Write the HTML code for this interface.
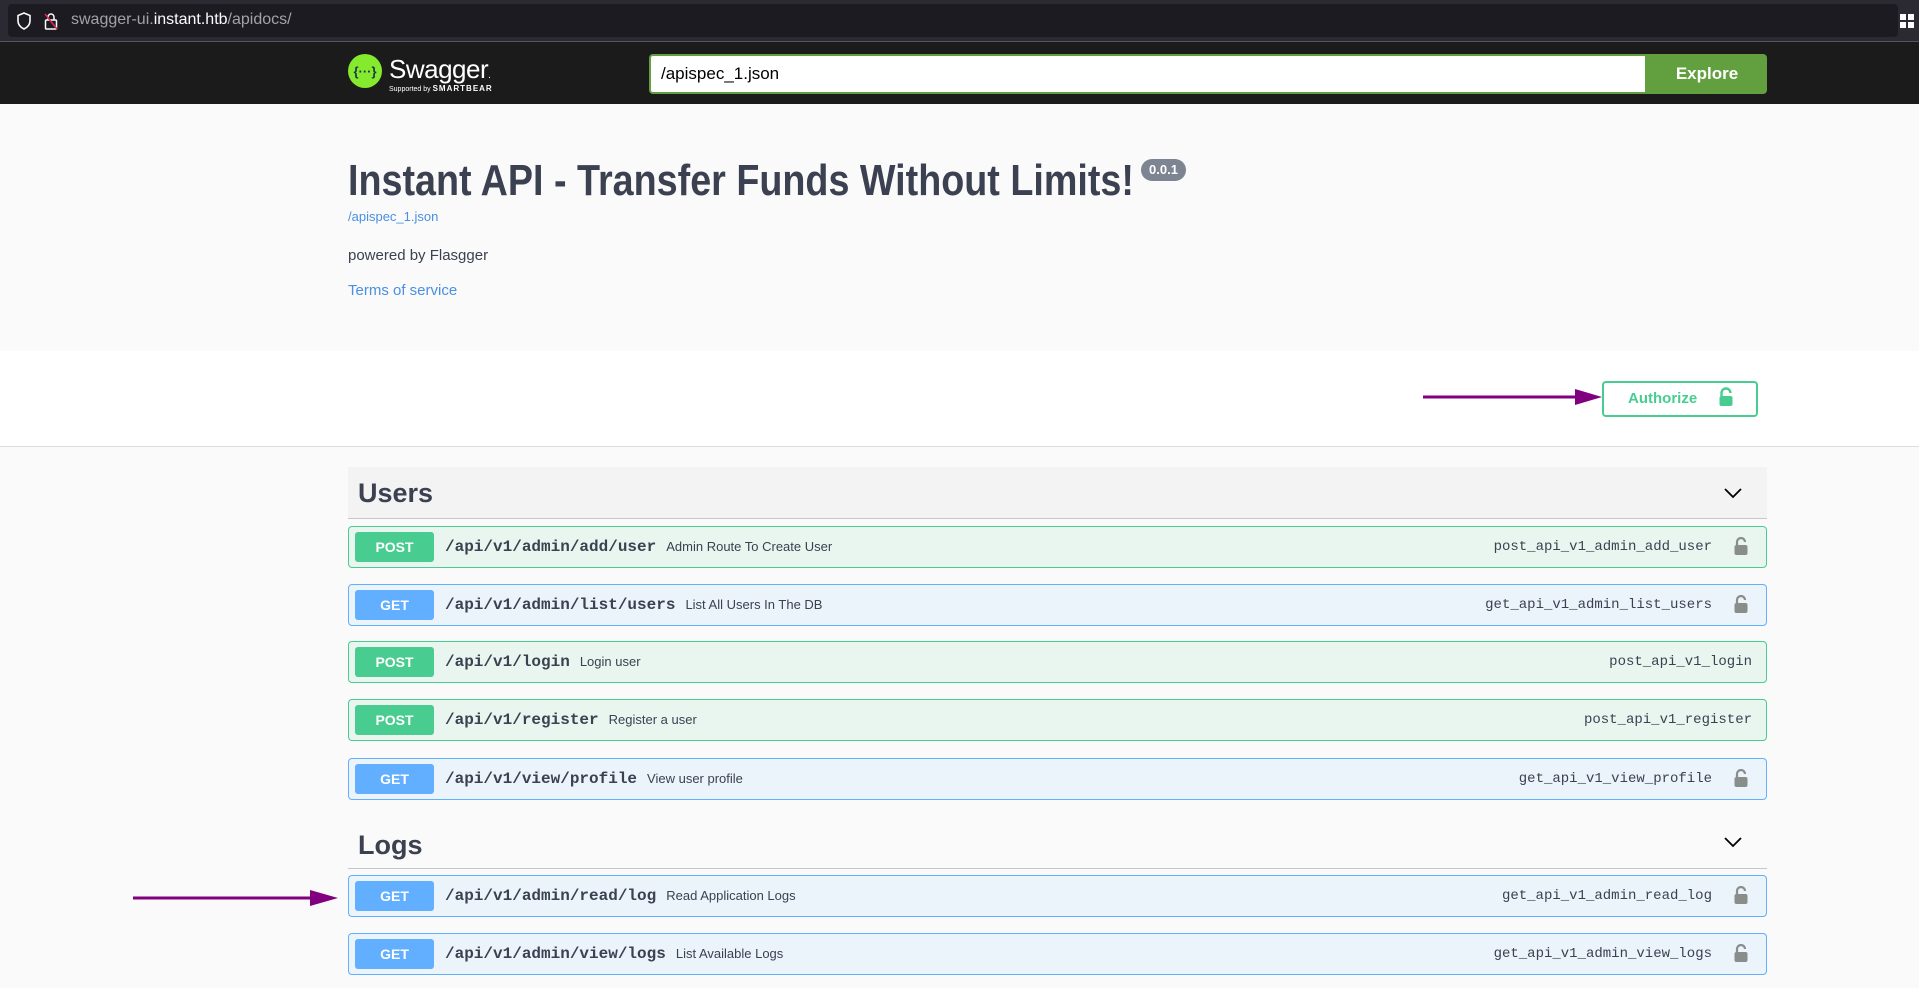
<!DOCTYPE html>
<html><head><meta charset="utf-8"><style>
*{box-sizing:border-box;margin:0;padding:0}
body{width:1919px;height:988px;overflow:hidden;background:#fafafa;font-family:"Liberation Sans",sans-serif;color:#3b4151;position:relative}
.abs{position:absolute}
.bb{left:0;top:0;width:1919px;height:42px;background:#2b2a33;border-bottom:1px solid #55545c}
.url{left:8px;top:4px;width:1890px;height:33px;background:#1c1b22;border-radius:4px}
.top{left:0;top:42px;width:1919px;height:62px;background:#1b1b1b}
.info{left:0;top:351px;width:1919px;height:96px;background:#fff;border-bottom:1px solid #ddd}
.row{left:348px;width:1419px;height:42px;border-radius:4px;border:1px solid}
.post{background:#e8f6ef;border-color:#49cc90}
.get{background:#ebf3fb;border-color:#61affe}
.m{position:absolute;left:6px;top:5px;width:79px;height:30px;border-radius:3px;color:#fff;font-weight:bold;font-size:14px;text-align:center;line-height:30px}
.post .m{background:#49cc90}.get .m{background:#61affe}
.p{position:absolute;left:96px;top:0;line-height:40px;font-family:"Liberation Mono",monospace;font-weight:bold;font-size:16px;color:#3b4151;white-space:nowrap}
.p span{font-family:"Liberation Sans",sans-serif;font-weight:normal;font-size:13px;margin-left:10px}
.op{position:absolute;right:54px;top:0;line-height:40px;font-family:"Liberation Mono",monospace;font-size:14px;color:#3b4151}
.op.nl{right:14px}
.lk{position:absolute;right:18px;top:10px}
.tag{left:348px;width:1419px;border-bottom:1px solid #c5c7cc;font-size:27px;font-weight:bold;padding-left:10px}
</style></head><body>
<div class="abs bb"></div><div class="abs url"></div>
<svg class="abs" style="left:16px;top:12px" width="16" height="18" viewBox="0 0 16 18"><path d="M8 1L2 3.5V9c0 4 3 6.5 6 8 3-1.5 6-4 6-8V3.5z" fill="none" stroke="#fbfbfe" stroke-width="1.6"/></svg>
<svg class="abs" style="left:44px;top:12px" width="14" height="18" viewBox="0 0 14 18"><rect x="1.5" y="8" width="11" height="9" rx="1" fill="none" stroke="#fbfbfe" stroke-width="1.5"/><path d="M4 8V5a3 3 0 016 0v3" fill="none" stroke="#fbfbfe" stroke-width="1.5"/><path d="M1 2l12 15" stroke="#e22850" stroke-width="1.5"/></svg>
<div class="abs" style="left:71px;top:11px;font-size:16px;color:#a3a2a8">swagger-ui.<span style="color:#fbfbfe">instant.htb</span>/apidocs/</div>
<svg class="abs" style="left:1900px;top:14px" width="14" height="14"><rect x="0" y="0" width="6" height="6" fill="#fbfbfe"/><rect x="8" y="0" width="6" height="6" fill="#fbfbfe"/><rect x="0" y="8" width="6" height="6" fill="#fbfbfe"/><rect x="8" y="8" width="6" height="6" fill="#fbfbfe"/></svg>
<div class="abs top"></div>
<svg class="abs" style="left:348px;top:54px" width="34" height="34"><circle cx="17" cy="17" r="17" fill="#85ea2d"/><text x="17" y="22" text-anchor="middle" font-size="13" font-family="Liberation Sans" font-weight="bold" fill="#173647">{···}</text></svg>
<div class="abs" style="left:389px;top:54px;font-size:26px;color:#fff;letter-spacing:-0.5px">Swagger<span style="font-size:10px">.</span></div>
<div class="abs" style="left:389px;top:84px;font-size:7px;color:#fff">Supported by <b style="font-size:8px;letter-spacing:1px">SMARTBEAR</b></div>
<div class="abs" style="left:649px;top:54px;width:998px;height:40px;background:#fff;border:2px solid #62a03f;border-radius:4px 0 0 4px;font-size:17px;line-height:36px;padding-left:10px;color:#000">/apispec_1.json</div>
<div class="abs" style="left:1647px;top:54px;width:120px;height:40px;background:#62a03f;border-radius:0 4px 4px 0;color:#fff;font-weight:bold;font-size:17px;line-height:40px;text-align:center">Explore</div>
<div class="abs" style="left:348px;top:156px;font-size:44px;font-weight:bold;white-space:nowrap;transform:scaleX(0.857);transform-origin:left top;color:#3b4151">Instant API - Transfer Funds Without Limits!</div>
<div class="abs" style="left:1141px;top:159px;width:45px;height:22px;background:#7d8492;border-radius:11px;color:#fff;font-weight:bold;font-size:13px;line-height:22px;text-align:center">0.0.1</div>
<div class="abs" style="left:348px;top:209px;font-size:13px;color:#4990e2">/apispec_1.json</div>
<div class="abs" style="left:348px;top:247px;font-size:15px">powered by Flasgger</div>
<div class="abs" style="left:348px;top:282px;font-size:15px;color:#4990e2">Terms of service</div>
<div class="abs info"></div>
<div class="abs" style="left:1602px;top:381px;width:156px;height:36px;border:2px solid #49cc90;border-radius:4px;background:#fff"></div>
<div class="abs" style="left:1628px;top:390px;font-size:15px;font-weight:bold;color:#49cc90">Authorize</div>
<svg class="abs" style="left:1718px;top:387px" width="16" height="20" viewBox="0 0 16 20"><path d="M3.5 9V6a4.5 4.5 0 019 0" fill="none" stroke="#49cc90" stroke-width="2.4"/><rect x="1.5" y="9" width="13" height="10" rx="2" fill="#49cc90"/></svg>
<svg class="abs" style="left:1420px;top:386px" width="185" height="22"><line x1="3" y1="11" x2="160" y2="11" stroke="#800080" stroke-width="3"/><path d="M155 3L182 11 155 19z" fill="#800080"/></svg>
<svg class="abs" style="left:130px;top:887px" width="212" height="22"><line x1="3" y1="11" x2="185" y2="11" stroke="#800080" stroke-width="3"/><path d="M180 3L208 11 180 19z" fill="#800080"/></svg>
<div class="abs tag" style="top:467px;height:52px;line-height:52px;background:#f3f3f3">Users</div>
<svg class="abs" style="left:1723px;top:486px" width="20" height="14"><path d="M2 3l8 8 8-8" fill="none" stroke="#000" stroke-width="1.8"/></svg>
<div class="abs tag" style="top:822px;height:47px;line-height:47px">Logs</div>
<svg class="abs" style="left:1723px;top:835px" width="20" height="14"><path d="M2 3l8 8 8-8" fill="none" stroke="#000" stroke-width="1.8"/></svg>

<div class="abs row post" style="top:526px"><div class="m">POST</div><div class="p">/api/v1/admin/add/user<span>Admin Route To Create User</span></div><div class="op">post_api_v1_admin_add_user</div><svg class="lk" width="14" height="18" viewBox="0 0 14 18"><path d="M3 8V5a4 4 0 018 0" fill="none" stroke="#8a8e8a" stroke-width="2.2"/><rect x="0.5" y="8" width="13" height="10" rx="2" fill="#8a8e8a"/></svg></div>
<div class="abs row get" style="top:584px"><div class="m">GET</div><div class="p">/api/v1/admin/list/users<span>List All Users In The DB</span></div><div class="op">get_api_v1_admin_list_users</div><svg class="lk" width="14" height="18" viewBox="0 0 14 18"><path d="M3 8V5a4 4 0 018 0" fill="none" stroke="#8a8e8a" stroke-width="2.2"/><rect x="0.5" y="8" width="13" height="10" rx="2" fill="#8a8e8a"/></svg></div>
<div class="abs row post" style="top:641px"><div class="m">POST</div><div class="p">/api/v1/login<span>Login user</span></div><div class="op nl">post_api_v1_login</div></div>
<div class="abs row post" style="top:699px"><div class="m">POST</div><div class="p">/api/v1/register<span>Register a user</span></div><div class="op nl">post_api_v1_register</div></div>
<div class="abs row get" style="top:758px"><div class="m">GET</div><div class="p">/api/v1/view/profile<span>View user profile</span></div><div class="op">get_api_v1_view_profile</div><svg class="lk" width="14" height="18" viewBox="0 0 14 18"><path d="M3 8V5a4 4 0 018 0" fill="none" stroke="#8a8e8a" stroke-width="2.2"/><rect x="0.5" y="8" width="13" height="10" rx="2" fill="#8a8e8a"/></svg></div>
<div class="abs row get" style="top:875px"><div class="m">GET</div><div class="p">/api/v1/admin/read/log<span>Read Application Logs</span></div><div class="op">get_api_v1_admin_read_log</div><svg class="lk" width="14" height="18" viewBox="0 0 14 18"><path d="M3 8V5a4 4 0 018 0" fill="none" stroke="#8a8e8a" stroke-width="2.2"/><rect x="0.5" y="8" width="13" height="10" rx="2" fill="#8a8e8a"/></svg></div>
<div class="abs row get" style="top:933px"><div class="m">GET</div><div class="p">/api/v1/admin/view/logs<span>List Available Logs</span></div><div class="op">get_api_v1_admin_view_logs</div><svg class="lk" width="14" height="18" viewBox="0 0 14 18"><path d="M3 8V5a4 4 0 018 0" fill="none" stroke="#8a8e8a" stroke-width="2.2"/><rect x="0.5" y="8" width="13" height="10" rx="2" fill="#8a8e8a"/></svg></div>
</body></html>
